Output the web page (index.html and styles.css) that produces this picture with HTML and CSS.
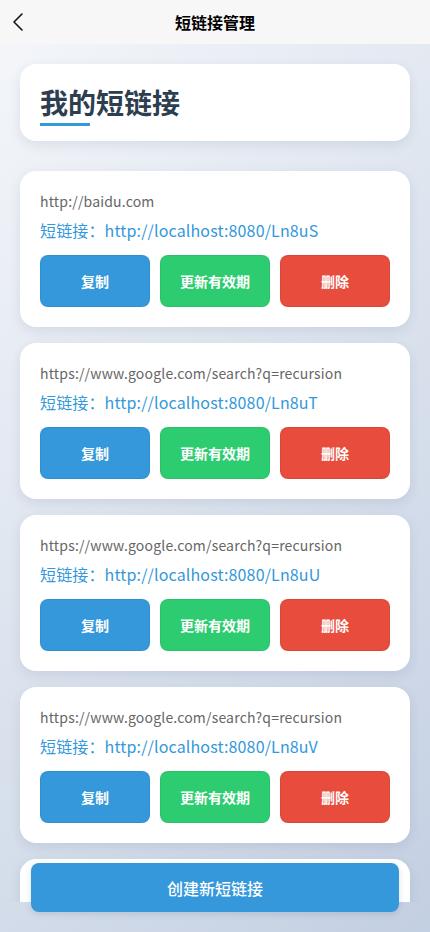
FILE: index.html
```html
<!DOCTYPE html>
<html lang="zh-CN">
<head>
<meta charset="utf-8">
<meta name="viewport" content="width=430, initial-scale=1">
<title>短链接管理</title>
<link rel="stylesheet" href="styles.css">
</head>
<body>
<div class="page">
  <header class="nav">
    <span class="nav-back">
      <svg width="14" height="20" viewBox="0 0 14 20"><path d="M11 2 L3 10 L11 18" fill="none" stroke="#111" stroke-width="1.6" stroke-linecap="round" stroke-linejoin="round"/></svg>
    </span>
    <h1 class="nav-title">短链接管理</h1>
  </header>
  <main class="scroll">
    <section class="card title-card">
      <h2 class="title">我的短链接</h2>
    </section>

    <section class="card link-card">
      <div class="origin">http://baidu.com</div>
      <div class="short">短链接：http://localhost:8080/Ln8uS</div>
      <div class="actions">
        <button class="btn btn-blue">复制</button>
        <button class="btn btn-green">更新有效期</button>
        <button class="btn btn-red">删除</button>
      </div>
    </section>

    <section class="card link-card">
      <div class="origin">https://www.google.com/search?q=recursion</div>
      <div class="short">短链接：http://localhost:8080/Ln8uT</div>
      <div class="actions">
        <button class="btn btn-blue">复制</button>
        <button class="btn btn-green">更新有效期</button>
        <button class="btn btn-red">删除</button>
      </div>
    </section>

    <section class="card link-card">
      <div class="origin">https://www.google.com/search?q=recursion</div>
      <div class="short">短链接：http://localhost:8080/Ln8uU</div>
      <div class="actions">
        <button class="btn btn-blue">复制</button>
        <button class="btn btn-green">更新有效期</button>
        <button class="btn btn-red">删除</button>
      </div>
    </section>

    <section class="card link-card">
      <div class="origin">https://www.google.com/search?q=recursion</div>
      <div class="short">短链接：http://localhost:8080/Ln8uV</div>
      <div class="actions">
        <button class="btn btn-blue">复制</button>
        <button class="btn btn-green">更新有效期</button>
        <button class="btn btn-red">删除</button>
      </div>
    </section>

    <section class="card link-card placeholder-card"></section>
  </main>
  <div class="footer-space"></div>
  <button class="create-btn">创建新短链接</button>
</div>
</body>
</html>
```
FILE: styles.css
```css
* { box-sizing: border-box; }
html, body {
  margin: 0;
  padding: 0;
  height: 932px;
}
body {
  font-family: "Noto Sans CJK SC", "Noto Sans", sans-serif;
  background: linear-gradient(135deg, #f5f7fa 0%, #c3cfe2 100%);
  overflow: hidden;
}
.page {
  position: relative;
  height: 932px;
  display: flex;
  flex-direction: column;
}
.nav {
  height: 44px;
  flex: none;
  background: #f7f7f7;
  display: flex;
  align-items: center;
  justify-content: center;
  position: relative;
}
.nav-back {
  position: absolute;
  left: 11px;
  top: 12px;
  display: flex;
}
.nav-title {
  margin: 0;
  font-size: 16px;
  font-weight: 700;
  color: #000;
}
.scroll {
  flex: 1;
  overflow: hidden;
  padding: 20px 20px 0;
  display: flex;
  flex-direction: column;
  gap: 30px;
}
.card {
  flex: none;
  background: #fff;
  border-radius: 16px;
  box-shadow: 0 4px 12px rgba(40, 60, 100, 0.1);
}
.title-card {
  padding: 20px 20px 15px;
}
.title {
  position: relative;
  display: inline-block;
  margin: 0;
  font-size: 28px;
  line-height: 36px;
  font-weight: 700;
  color: #2c3e50;
  padding-bottom: 6px;
}
.title::after {
  content: "";
  position: absolute;
  left: 0;
  bottom: 0;
  width: 50px;
  height: 3px;
  background: #3498db;
}
.link-card {
  padding: 20px;
  margin-top: -14px;
}
.title-card + .link-card { margin-top: 0; }
.placeholder-card { height: 156px; }
.origin {
  font-size: 14px;
  line-height: 20px;
  color: #666;
  letter-spacing: 0.18px;
}
.short {
  margin-top: 8px;
  font-size: 16px;
  line-height: 22px;
  color: #3498db;
  letter-spacing: 0.15px;
}
.actions {
  margin-top: 14px;
  display: grid;
  grid-template-columns: repeat(3, 1fr);
  gap: 10px;
}
.btn {
  height: 52px;
  border: 1px solid rgba(0, 0, 0, 0.06);
  border-radius: 8px;
  color: #fff;
  font-family: inherit;
  font-size: 14px;
  font-weight: 700;
  padding: 0;
}
.btn-blue { background: #3498db; }
.btn-green { background: #2ecc71; }
.btn-red { background: #e74c3c; }
.footer-space {
  height: 30px;
  flex: none;
}
.create-btn {
  position: absolute;
  left: 31px;
  right: 31px;
  bottom: 20px;
  height: 49px;
  border: none;
  border-radius: 8px;
  background: #3498db;
  color: #fff;
  font-family: inherit;
  font-size: 16px;
  font-weight: 500;
  box-shadow: 0 2px 6px rgba(40, 60, 100, 0.15);
}
```
